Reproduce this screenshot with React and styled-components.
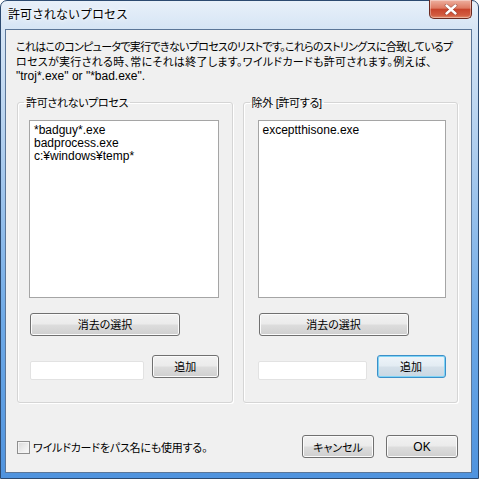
import React from 'react';
import styled, { createGlobalStyle, css } from 'styled-components';

const GlobalStyle = createGlobalStyle`
  html, body {
    margin: 0;
    padding: 0;
    background: #ffffff;
    overflow: hidden;
  }
  body {
    font-family: "Liberation Sans", "Noto Sans CJK JP", sans-serif;
    font-size: 12px;
    color: #000;
  }
  * {
    box-sizing: border-box;
  }
`;

const Window = styled.div`
  width: 479px;
  height: 479px;
  display: flex;
  flex-direction: column;
  padding: 0 6px 5px 4px;
  border: 1px solid #2c4a70;
  border-radius: 7px 7px 0 0;
  background: linear-gradient(180deg, #e8f0f9 0px, #d6e5f5 28px, #aecdee 150px, #6ea9e6 320px, #4f93de 100%);
`;

const TitleBar = styled.div`
  height: 28px;
  display: flex;
  align-items: flex-start;
  justify-content: space-between;
`;

const Title = styled.div`
  padding: 5px 0 0 3px;
  font-family: "Noto Sans CJK JP", sans-serif;
  font-size: 12px;
  line-height: 16px;
  text-shadow: 0 0 6px #ffffff, 0 0 3px #ffffff;
`;

const CloseButton = styled.div`
  width: 43px;
  height: 19px;
  margin: -1px 0 0 0;
  display: flex;
  align-items: center;
  justify-content: center;
  border: 1px solid #6b2a20;
  border-top: none;
  border-radius: 0 0 5px 5px;
  background: linear-gradient(180deg, #eeb0a0 0%, #de7a62 45%, #c8442c 52%, #d25c40 85%, #e4906e 100%);
  box-shadow: inset 0 0 0 1px rgba(255, 255, 255, 0.35);
`;

const Client = styled.div`
  flex: 1;
  display: flex;
  flex-direction: column;
  padding: 10px 13px 13px 11px;
  background: #f0f0f0;
  border: 1px solid #5b7698;
`;

const Description = styled.div`
  margin-left: -1px;
  line-height: 14.5px;
  white-space: nowrap;
  font-feature-settings: "palt";
`;

const DescLine = styled.div`
  font-size: ${(p) => (p.$latin ? 12 : 11)}px;
  letter-spacing: ${(p) => p.$spacing || 0}px;
`;

const Groups = styled.div`
  display: flex;
  gap: 10px;
  margin-top: 12px;
`;

const Group = styled.fieldset`
  flex: 1;
  min-width: 0;
  margin: 0;
  padding: 0 0 22px 6px;
  border: 1px solid #d5d5d5;
  border-radius: 3px;
  box-shadow: inset 1px 1px 0 #ffffff, 1px 1px 0 #ffffff;
`;

const Legend = styled.legend`
  padding: 0 2px;
  font-size: 11px;
  line-height: 14px;
  letter-spacing: -0.3px;
  font-feature-settings: "palt";
`;

const GroupBody = styled.div`
  display: flex;
  flex-direction: column;
  padding: 10px ${(p) => p.$right}px 0 ${(p) => p.$left}px;
`;

const ListBox = styled.div`
  height: 178px;
  padding: 3px 4px;
  background: #ffffff;
  border: 1px solid #a5a5a5;
  line-height: 13px;
`;

const Button = styled.button`
  height: 23px;
  width: ${(p) => p.$width}px;
  padding: 0;
  font-family: "Liberation Sans", "Noto Sans CJK JP", sans-serif;
  font-size: ${(p) => (p.$latin ? 12 : 11)}px;
  color: #000;
  border: 1px solid #707070;
  border-radius: 3px;
  background: linear-gradient(180deg, #f2f2f2 0%, #ebebeb 48%, #dddddd 52%, #cfcfcf 100%);
  box-shadow: inset 0 0 0 1px #fbfbfb;
  font-feature-settings: "palt";
  ${(p) =>
    p.$focused &&
    css`
      border-color: #3c8fc8;
      background: linear-gradient(180deg, #eef4f9 0%, #e3ecf3 48%, #d5e0e9 52%, #c9d7e3 100%);
      box-shadow: inset 0 0 0 1px #7fd4f6;
    `}
`;

const ClearButton = styled(Button)`
  margin: 15px 0 0 1px;
`;

const InputRow = styled.div`
  display: flex;
  align-items: flex-start;
  gap: ${(p) => p.$gap}px;
  margin: 19px 0 0 ${(p) => p.$shift}px;
`;

const TextInput = styled.div`
  width: ${(p) => p.$width}px;
  height: 19px;
  margin-top: 6px;
  background: #ffffff;
  border: 1px solid #e2e2e2;
  border-radius: 2px;
`;

const BottomRow = styled.div`
  display: flex;
  align-items: center;
  margin-top: auto;
`;

const CheckLabel = styled.label`
  display: flex;
  align-items: center;
  gap: 3px;
  font-size: 11px;
  letter-spacing: -0.2px;
  font-feature-settings: "palt";
`;

const CheckBox = styled.span`
  width: 13px;
  height: 13px;
  border: 1px solid #8f8f8f;
  background: linear-gradient(135deg, #d8d8d8 0%, #eeeeee 60%, #fafafa 100%);
  box-shadow: inset 0 0 0 1px #f4f4f4;
`;

const DialogButtons = styled.div`
  display: flex;
  gap: 12px;
  margin: 0 0 1px auto;
`;

const GroupPanel = ({ title, items, left, right, inputWidth, gap, shift, focused }) => (
  <Group>
    <Legend>{title}</Legend>
    <GroupBody $left={left} $right={right}>
      <ListBox>
        {items.map((item) => (
          <div key={item}>{item}</div>
        ))}
      </ListBox>
      <ClearButton $width={150}>消去の選択</ClearButton>
      <InputRow $gap={gap} $shift={shift}>
        <TextInput $width={inputWidth} />
        <Button $width={69} $focused={focused}>追加</Button>
      </InputRow>
    </GroupBody>
  </Group>
);

const App = () => (
  <>
    <GlobalStyle />
    <Window>
      <TitleBar>
        <Title>許可されないプロセス</Title>
        <CloseButton>
          <svg width="14" height="11" viewBox="0 0 14 11">
            <path d="M2.5 1.5 L11.5 9.5 M11.5 1.5 L2.5 9.5" stroke="#5a1a12" strokeWidth="3.6" strokeLinecap="round" opacity="0.5" />
            <path d="M2.5 1.5 L11.5 9.5 M11.5 1.5 L2.5 9.5" stroke="#ffffff" strokeWidth="2.4" strokeLinecap="round" />
          </svg>
        </CloseButton>
      </TitleBar>
      <Client>
        <Description>
          <DescLine $spacing={-0.68}>
            これはこのコンピュータで実行できないプロセスのリストです。これらのストリングスに合致しているプ
          </DescLine>
          <DescLine $spacing={0.3}>
            ロセスが実行される時、常にそれは終了します。ワイルドカードも許可されます。例えば、
          </DescLine>
          <DescLine $latin>"troj*.exe" or "*bad.exe".</DescLine>
        </Description>
        <Groups>
          <GroupPanel
            title="許可されないプロセス"
            items={['*badguy*.exe', 'badprocess.exe', 'c:¥windows¥temp*']}
            left={5}
            right={13}
            inputWidth={118}
            gap={8}
            shift={1}
          />
          <GroupPanel
            title="除外 [許可する]"
            items={['exceptthisone.exe']}
            left={8}
            right={11}
            inputWidth={109}
            gap={10}
            shift={0}
            focused
          />
        </Groups>
        <BottomRow>
          <CheckLabel>
            <CheckBox />
            ワイルドカードをパス名にも使用する。
          </CheckLabel>
          <DialogButtons>
            <Button $width={72}>キャンセル</Button>
            <Button $width={72} $latin>OK</Button>
          </DialogButtons>
        </BottomRow>
      </Client>
    </Window>
  </>
);

export default App;
